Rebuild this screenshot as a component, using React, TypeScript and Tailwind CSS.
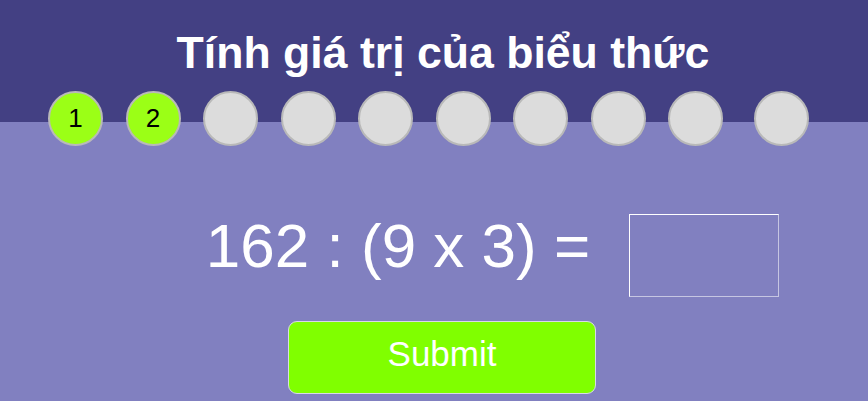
import React from "react";

const steps = [1, 2, 3, 4, 5, 6, 7, 8, 9, 10];
const done = 2;

export default function App() {
  return (
    <div
      className="w-[868px] h-[401px] overflow-hidden bg-[#8180c0] relative"
      style={{ fontFamily: '"Liberation Sans", Arial, sans-serif' }}
    >
      {/* header band */}
      <div className="h-[122px] bg-[#434083]" />

      {/* title + progress dots sit over the band edge */}
      <div className="absolute top-0 left-0 w-full">
        <h1 className="pt-[27px] pl-[18px] text-center text-[44.6px] leading-[52px] font-bold text-white">
          Tính giá trị của biểu thức
        </h1>
        <div className="flex pl-[48px] pt-[12px]">
          {steps.map((n, i) => (
            <div
              key={n}
              className={
                "w-[55px] h-[55px] shrink-0 rounded-full border-2 border-[#b9b9b9] flex items-center justify-center text-[26px] text-black " +
                (i < done ? "bg-[#9bff16]" : "bg-[#dcdcdc]") +
                (i === 0 ? "" : i === steps.length - 1 ? " ml-[31px]" : " ml-[22.5px]")
              }
            >
              {i < done ? n : ""}
            </div>
          ))}
        </div>
      </div>

      {/* question */}
      <div className="flex items-center pl-[117px] justify-center mt-[89px]">
        <div className="text-[62px] leading-[70px] text-white whitespace-pre mb-[18px]">162 : (9 x 3) =</div>
        <div className="ml-[39px] w-[150px] h-[83px] border border-t-white border-l-white border-b-[#c6c6e2] border-r-[#c6c6e2]" />
      </div>

      <div className="flex justify-center mt-[22px]">
        <button className="ml-[16px] w-[308px] h-[73px] rounded-[9px] bg-[#80ff00] border border-[#d8d8e8] text-white text-[35px] pb-[6px]">
          Submit
        </button>
      </div>
    </div>
  );
}
